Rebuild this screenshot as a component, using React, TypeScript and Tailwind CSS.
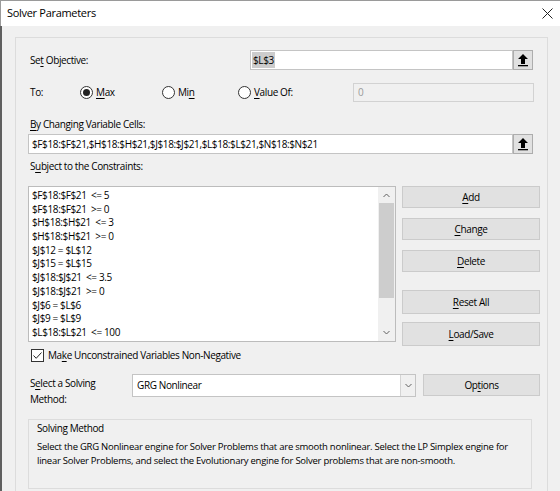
import React from 'react';

const K = ({ children }: { children: React.ReactNode }) => (
  <span className="underline underline-offset-[2px] decoration-[1px]">{children}</span>
);

const RefButton = () => (
  <div className="w-[20px] h-[20px] bg-[#e1e1e1] border border-[#adadad] flex items-center justify-center">
    <svg width="12" height="14" viewBox="0 0 12 14">
      <path d="M6 1 L11 6 L8 6 L8 11 L4 11 L4 6 L1 6 Z" fill="#000" />
      <rect x="1" y="12" width="10" height="1.3" fill="#000" />
    </svg>
  </div>
);

const Radio = ({ checked }: { checked?: boolean }) => (
  <div className="w-[13px] h-[13px] rounded-full border border-[#333] bg-white flex items-center justify-center shrink-0">
    {checked && <div className="w-[7px] h-[7px] rounded-full bg-[#222]" />}
  </div>
);

const Btn = ({ children, className }: { children: React.ReactNode; className: string }) => (
  <div
    className={`w-[138px] bg-[#e1e1e1] border border-[#cbcbcb] flex items-center justify-center ${className}`}
  >
    {children}
  </div>
);

const Chevron = ({ up }: { up?: boolean }) => (
  <svg width="7" height="5" viewBox="0 0 7 5">
    <path d={up ? 'M0.5 4 L3.5 1 L6.5 4' : 'M0.5 1 L3.5 4 L6.5 1'} stroke="#606060" strokeWidth="1" fill="none" />
  </svg>
);

const constraints = [
  '$F$18:$F$21  <= 5',
  '$F$18:$F$21  >= 0',
  '$H$18:$H$21  <= 3',
  '$H$18:$H$21  >= 0',
  '$J$12 = $L$12',
  '$J$15 = $L$15',
  '$J$18:$J$21  <= 3.5',
  '$J$18:$J$21  >= 0',
  '$J$6 = $L$6',
  '$J$9 = $L$9',
  '$L$18:$L$21  <= 100',
];

export default function App() {
  return (
    <div className="w-[560px] h-[491px] overflow-hidden bg-[#f0f0f0] flex flex-col font-['Open_Sans',sans-serif] text-[10px] tracking-[-0.38px] text-black">
      <div className="h-[26px] shrink-0 bg-white border-t border-l border-[#9a9a9a] flex items-center justify-between pl-[6px] pr-[7px]">
        <span className="text-[11px] tracking-[-0.3px]">Solver Parameters</span>
        <svg width="11" height="11" viewBox="0 0 11 11">
          <path d="M0.5 0.5 L10.5 10.5 M10.5 0.5 L0.5 10.5" stroke="#222" strokeWidth="1" />
        </svg>
      </div>

      <div className="flex-1 border-l-2 border-[#5f5f5f] pl-[13px] pt-[11px]">
        <div className="w-[533px] h-[480px] border border-[#dcdcdc] flex flex-col">
          {/* Set Objective */}
          <div className="mt-[12px] h-[20px] flex items-center">
            <div className="pl-[14px] w-[234px]">
              Se<K>t</K> Objective:
            </div>
            <div className="w-[263px] h-[20px] bg-white border border-[#c4c4c4] flex items-center pl-[1px]">
              <span className="bg-[#cccccc] h-[16px] leading-[16px] px-[1px]">$L$3</span>
            </div>
            <RefButton />
          </div>

          {/* To */}
          <div className="mt-[13px] h-[19px] flex items-center">
            <div className="pl-[14px] w-[64px]">To:</div>
            <div className="w-[82px] flex items-center gap-[3px]">
              <Radio checked />
              <span>
                <K>M</K>ax
              </span>
            </div>
            <div className="w-[76px] flex items-center gap-[3px]">
              <Radio />
              <span>
                Mi<K>n</K>
              </span>
            </div>
            <div className="w-[115px] flex items-center gap-[3px]">
              <Radio />
              <span>
                <K>V</K>alue Of:
              </span>
            </div>
            <div className="w-[181px] h-[19px] bg-[#f0f0f0] border border-[#d2d2d2] flex items-center pl-[4px] text-[#9a9a9a]">
              0
            </div>
          </div>

          {/* By Changing */}
          <div className="mt-[14px] pl-[14px] h-[16px] leading-[16px]">
            <K>B</K>y Changing Variable Cells:
          </div>
          <div className="mt-[2px] ml-[12px] h-[20px] flex">
            <div className="w-[485px] h-[20px] bg-white border border-[#c4c4c4] flex items-center pl-[3px]">
              $F$18:$F$21,$H$18:$H$21,$J$18:$J$21,$L$18:$L$21,$N$18:$N$21
            </div>
            <RefButton />
          </div>

          {/* Subject to */}
          <div className="mt-[4px] pl-[14px] h-[16px] leading-[16px]">
            S<K>u</K>bject to the Constraints:
          </div>
          <div className="mt-[12px] ml-[12px] flex">
            <div className="w-[368px] h-[156px] bg-white border border-[#bcbcbc] flex">
              <div className="flex-1 pl-[3px] pt-[2px]">
                {constraints.map((c) => (
                  <div key={c} className="h-[13.7px] leading-[13.7px] whitespace-pre">
                    {c}
                  </div>
                ))}
              </div>
              <div className="w-[17px] bg-[#f0f0f0] flex flex-col items-center">
                <div className="h-[16px] flex items-center justify-center">
                  <Chevron up />
                </div>
                <div className="w-[15px] h-[95px] bg-[#cdcdcd]" />
                <div className="flex-1" />
                <div className="h-[17px] flex items-center justify-center">
                  <Chevron />
                </div>
              </div>
            </div>
            <div className="ml-[6px] flex flex-col">
              <Btn className="h-[22px]">
                <span>
                  <K>A</K>dd
                </span>
              </Btn>
              <Btn className="h-[22px] mt-[10px]">
                <span>
                  <K>C</K>hange
                </span>
              </Btn>
              <Btn className="h-[22px] mt-[10px]">
                <span>
                  <K>D</K>elete
                </span>
              </Btn>
              <Btn className="h-[24px] mt-[18px]">
                <span>
                  <K>R</K>eset All
                </span>
              </Btn>
              <Btn className="h-[24px] mt-[8px]">
                <span>
                  <K>L</K>oad/Save
                </span>
              </Btn>
            </div>
          </div>

          {/* Checkbox */}
          <div className="mt-[3px] ml-[15px] h-[13px] flex items-center gap-[4px]">
            <div className="w-[13px] h-[13px] border border-[#333] bg-white flex items-center justify-center">
              <svg width="11" height="11" viewBox="0 0 11 11">
                <path d="M1.5 5.5 L4.2 8.3 L9.5 2.5" stroke="#222" strokeWidth="1" fill="none" />
              </svg>
            </div>
            <span>
              Ma<K>k</K>e Unconstrained Variables Non-Negative
            </span>
          </div>

          {/* Solving method */}
          <div className="mt-[12px] h-[23px] flex items-start">
            <div className="pl-[14px] w-[116px] leading-[16px] pt-[1px]">
              S<K>e</K>lect a Solving
              <br />
              Method:
            </div>
            <div className="w-[284px] h-[23px] bg-white border border-[#c4c4c4] flex">
              <div className="flex-1 flex items-center pl-[4px]">GRG Nonlinear</div>
              <div className="w-[15px] bg-[#f0f0f0] border-l border-[#d4d4d4] flex items-center justify-center">
                <Chevron />
              </div>
            </div>
            <div className="ml-[7px] w-[117px] h-[22px] bg-[#e1e1e1] border border-[#cbcbcb] flex items-center justify-center">
              <span>
                Op<K>t</K>ions
              </span>
            </div>
          </div>

          {/* Solving Method group */}
          <div className="mt-[22px] ml-[12px] w-[504px] h-[70px] border border-[#dcdcdc] pl-[8px]">
            <div className="h-[16px] leading-[16px]">Solving Method</div>
            <div className="mt-[4px] leading-[14px] text-[9.5px] tracking-[-0.25px]">
              Select the GRG Nonlinear engine for Solver Problems that are smooth nonlinear. Select the LP Simplex engine for
              linear Solver Problems, and select the Evolutionary engine for Solver problems that are non-smooth.
            </div>
          </div>
        </div>
      </div>
    </div>
  );
}
